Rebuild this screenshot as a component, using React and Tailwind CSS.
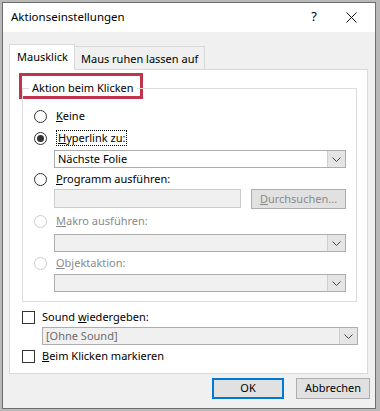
import React from 'react';

const font = { fontFamily: '"Noto Sans", "Open Sans", sans-serif' };

function Chevron({ color = '#444' }) {
  return (
    <svg width="9" height="5" viewBox="0 0 9 5" fill="none">
      <path d="M0.5 0.5 L4.5 4.5 L8.5 0.5" stroke={color} strokeWidth="1" />
    </svg>
  );
}

function Radio({ checked, disabled }) {
  return (
    <span
      className={`w-[13px] h-[13px] rounded-full border bg-white flex items-center justify-center shrink-0 ${
        disabled ? 'border-[#cccccc]' : 'border-[#333333]'
      }`}
    >
      {checked && <span className="w-[7px] h-[7px] rounded-full bg-[#333333]" />}
    </span>
  );
}

function Checkbox() {
  return <span className="w-[13px] h-[13px] border border-[#333333] bg-white shrink-0" />;
}

function Select({ value, disabled, muted, className = '' }) {
  return (
    <div
      className={`flex h-[18px] border border-[#adadad] ${disabled ? 'bg-[#f0f0f0]' : 'bg-white'} ${className}`}
    >
      <div className={`flex-1 pl-[3px] leading-[16px] ${muted ? 'text-[#6d6d6d]' : 'text-black'}`}>{value}</div>
      <div className="w-[18px] h-[16px] bg-[#e5e5e5] border-l border-[#cfcfcf] flex items-center justify-center">
        <Chevron />
      </div>
    </div>
  );
}

function Row({ children, className = '' }) {
  return <div className={`flex items-center gap-[8px] h-[16px] ${className}`}>{children}</div>;
}

export default function App() {
  return (
    <div className="w-[380px] h-[411px] bg-[#b9b9b9] overflow-hidden pt-[2px] pl-[2px] text-[11px]" style={font}>
      <div className="w-[374px] h-[407px] border border-[#6e6e6e] bg-[#f0f0f0] flex flex-col">
        {/* Title bar */}
        <div className="h-[29px] bg-white flex items-center pl-[8px] pb-[1px] shrink-0">
          <span className="text-black text-[11.5px]">Aktionseinstellungen</span>
          <span className="ml-auto mr-[29px] text-[13px] text-black">?</span>
          <svg width="11" height="11" viewBox="0 0 11 11" className="mr-[18px]">
            <path d="M0.5 0.5 L10.5 10.5 M10.5 0.5 L0.5 10.5" stroke="#111" strokeWidth="1" />
          </svg>
        </div>

        {/* Tabs */}
        <div className="flex items-end pl-[6px] mt-[11px] h-[26px] relative z-10">
          <div className="h-[26px] w-[66px] bg-white border border-b-0 border-[#d9d9d9] flex items-start pt-[4px] pl-[7px] -mb-px">
            Mausklick
          </div>
          <div className="h-[23px] w-[130px] border border-l-0 border-b-0 border-[#d9d9d9] flex items-start pt-[4px] pl-[6px]">
            Maus ruhen lassen auf
          </div>
        </div>

        {/* Panel */}
        <div className="ml-[6px] w-[359px] h-[305px] bg-white border border-[#d9d9d9] relative">
          <div className="absolute left-[9px] top-[3px] w-[124px] h-[26px] border-[3px] border-[#c4314b]" />

          <div className="ml-[12px] mr-[10px] mt-[18px] h-[214px] border border-[#dcdcdc] relative">
            <div className="absolute left-[6px] -top-[9px] bg-white px-[3px] leading-[16px]">Aktion beim Klicken</div>

            <div className="pl-[11px] pt-[19px]">
              <Row>
                <Radio />
                <span className="ml-[1px]"><u>K</u>eine</span>
              </Row>
              <Row className="mt-[6px]">
                <Radio checked />
                <span className="ml-[1px] border border-dotted border-black px-px leading-[14px]">
                  <u>H</u>yperlink zu:
                </span>
              </Row>
              <Select value="Nächste Folie" className="ml-[20px] mr-[10px] mt-[4px]" />
              <Row className="mt-[3px]">
                <Radio />
                <span className="ml-[1px]"><u>P</u>rogramm ausführen:</span>
              </Row>
              <div className="flex ml-[20px] mr-[10px] mt-[2px] gap-[10px]">
                <div className="w-[187px] h-[19px] bg-[#f0f0f0] border border-[#cccccc]" />
                <div className="flex-1 h-[20px] bg-[#e1e1e1] border border-[#adadad] text-[#8a8a8a] flex items-center justify-center">
                  <span><u>D</u>urchsuchen...</span>
                </div>
              </div>
              <Row className="mt-[4px] text-[#8a8a8a]">
                <Radio disabled />
                <span className="ml-[1px]"><u>M</u>akro ausführen:</span>
              </Row>
              <Select disabled className="ml-[20px] mr-[10px] mt-[5px]" />
              <Row className="mt-[3px] text-[#8a8a8a]">
                <Radio disabled />
                <span className="ml-[1px]"><u>O</u>bjektaktion:</span>
              </Row>
              <Select disabled className="ml-[20px] mr-[10px] mt-[3px]" />
            </div>
          </div>

          <div className="ml-[12px] mr-[9px] mt-[7px]">
            <Row>
              <Checkbox />
              <span className="-ml-px">Sound <u>w</u>iedergeben:</span>
            </Row>
            <Select disabled muted value="[Ohne Sound]" className="ml-[20px] mt-[2px]" />
            <Row className="mt-[3px]">
              <Checkbox />
              <span className="-ml-px"><u>B</u>eim Klicken markieren</span>
            </Row>
          </div>
        </div>

        {/* Buttons */}
        <div className="flex justify-end gap-[12px] mt-[4px] pr-[5px]">
          <div className="w-[72px] h-[21px] bg-[#e1e1e1] border-2 border-[#0078d7] flex items-center justify-center">OK</div>
          <div className="w-[74px] h-[21px] bg-[#e1e1e1] border border-[#adadad] flex items-center justify-center">Abbrechen</div>
        </div>
      </div>
    </div>
  );
}
